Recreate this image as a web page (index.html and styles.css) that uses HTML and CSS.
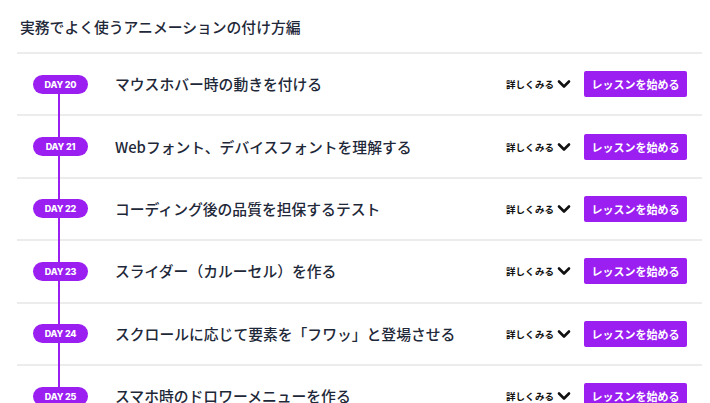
FILE: index.html
```html
<!DOCTYPE html>
<html lang="ja">
<head>
<meta charset="utf-8">
<link rel="stylesheet" href="styles.css">
</head>
<body>
<div class="wrap">
  <h2 class="head">実務でよく使うアニメーションの付け方編</h2>
  <ul class="list">
    <li class="row first"><span class="badge">DAY 20</span><span class="title">マウスホバー時の動きを付ける</span><span class="more">詳しくみる<svg class="chev" viewBox="0 0 14 10"><path d="M2 2.5 L7 7.5 L12 2.5" fill="none" stroke="#111" stroke-width="2.6" stroke-linecap="round" stroke-linejoin="round"/></svg></span><span class="btn">レッスンを始める</span></li>
    <li class="row"><span class="badge">DAY 21</span><span class="title">Webフォント、デバイスフォントを理解する</span><span class="more">詳しくみる<svg class="chev" viewBox="0 0 14 10"><path d="M2 2.5 L7 7.5 L12 2.5" fill="none" stroke="#111" stroke-width="2.6" stroke-linecap="round" stroke-linejoin="round"/></svg></span><span class="btn">レッスンを始める</span></li>
    <li class="row"><span class="badge">DAY 22</span><span class="title">コーディング後の品質を担保するテスト</span><span class="more">詳しくみる<svg class="chev" viewBox="0 0 14 10"><path d="M2 2.5 L7 7.5 L12 2.5" fill="none" stroke="#111" stroke-width="2.6" stroke-linecap="round" stroke-linejoin="round"/></svg></span><span class="btn">レッスンを始める</span></li>
    <li class="row"><span class="badge">DAY 23</span><span class="title">スライダー（カルーセル）を作る</span><span class="more">詳しくみる<svg class="chev" viewBox="0 0 14 10"><path d="M2 2.5 L7 7.5 L12 2.5" fill="none" stroke="#111" stroke-width="2.6" stroke-linecap="round" stroke-linejoin="round"/></svg></span><span class="btn">レッスンを始める</span></li>
    <li class="row"><span class="badge">DAY 24</span><span class="title">スクロールに応じて要素を「フワッ」と登場させる</span><span class="more">詳しくみる<svg class="chev" viewBox="0 0 14 10"><path d="M2 2.5 L7 7.5 L12 2.5" fill="none" stroke="#111" stroke-width="2.6" stroke-linecap="round" stroke-linejoin="round"/></svg></span><span class="btn">レッスンを始める</span></li>
    <li class="row"><span class="badge">DAY 25</span><span class="title">スマホ時のドロワーメニューを作る</span><span class="more">詳しくみる<svg class="chev" viewBox="0 0 14 10"><path d="M2 2.5 L7 7.5 L12 2.5" fill="none" stroke="#111" stroke-width="2.6" stroke-linecap="round" stroke-linejoin="round"/></svg></span><span class="btn">レッスンを始める</span></li>
  </ul>
</div>
</body>
</html>
```

FILE: styles.css
```css
* { box-sizing: border-box; }
html, body { margin: 0; padding: 0; background: #fff; overflow: hidden; }
body {
  font-family: "Noto Sans CJK JP", "Noto Sans", sans-serif;
  color: #1e2838;
}
.wrap {
  padding: 0 8px 0 17px;
}
.head {
  margin: 0;
  height: 54px;
  padding: 16px 0 0 3px;
  font-size: 14.8px;
  line-height: 22px;
  font-weight: 500;
  border-bottom: 2px solid #ececec;
}
.list {
  list-style: none;
  margin: 0;
  padding: 0;
}
.row {
  position: relative;
  display: flex;
  align-items: center;
  height: 62.4px;
  border-bottom: 2px solid #ececec;
  padding: 0 15px 0 16px;
}
.row::before {
  content: "";
  position: absolute;
  left: 41px;
  top: -2px;
  bottom: -2px;
  width: 2px;
  background: #9a1ff0;
}
.row.first::before { top: 50%; }
.badge {
  position: relative;
  z-index: 1;
  flex: none;
  width: 55px;
  height: 19px;
  border-radius: 10px;
  background: #9a1ff0;
  color: #fff;
  font-family: "Inter", "Open Sans", sans-serif;
  font-weight: 800;
  font-size: 9px;
  letter-spacing: -0.2px;
  display: flex;
  align-items: center;
  justify-content: center;
}
.title {
  flex: 1;
  margin-left: 27px;
  margin-top: -1px;
  font-size: 14.8px;
  font-weight: 500;
  color: #1e2838;
  white-space: nowrap;
}
.more {
  flex: none;
  display: flex;
  align-items: center;
  font-size: 9.5px;
  font-weight: 700;
  color: #111;
}
.chev {
  width: 14px;
  height: 10px;
  margin-left: 3px;
}
.btn {
  flex: none;
  margin-left: 13px;
  width: 103px;
  height: 26px;
  background: #9a1ff0;
  border-radius: 2px;
  color: #fff;
  font-size: 11px;
  font-weight: 700;
  display: flex;
  align-items: center;
  justify-content: center;
}
```
